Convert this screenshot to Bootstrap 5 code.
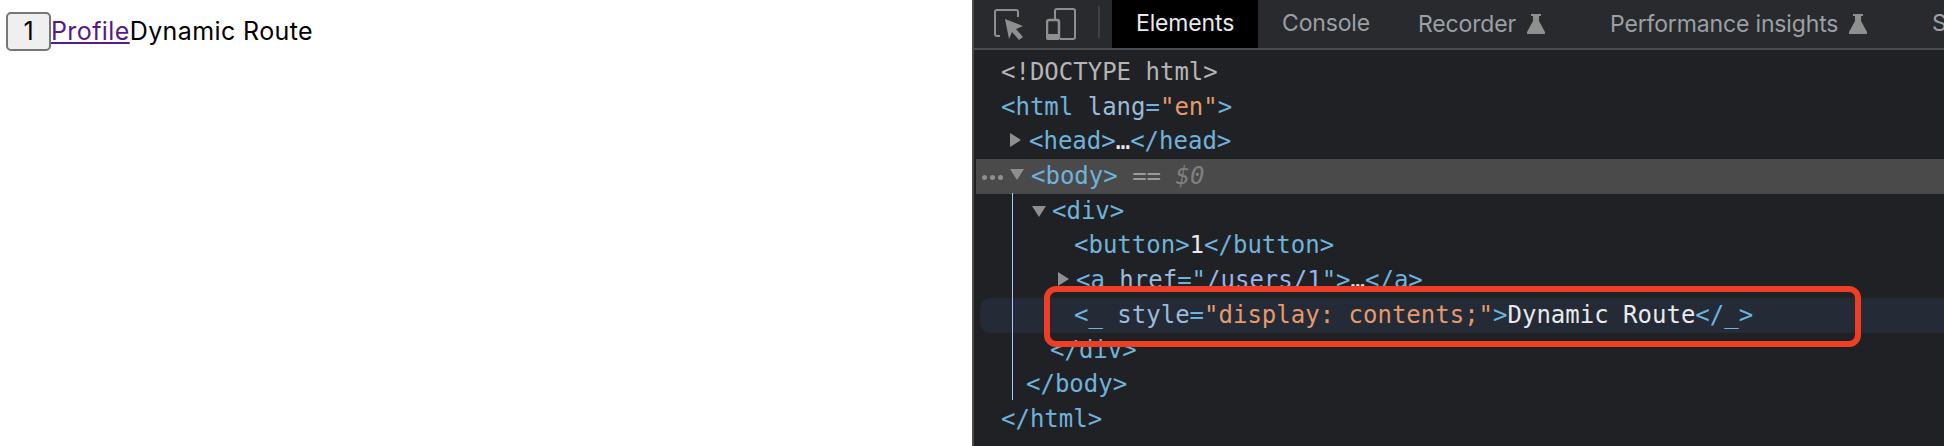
<!DOCTYPE html>
<html lang="en"><head><meta charset="utf-8">
<link href="https://cdn.jsdelivr.net/npm/bootstrap@5.3.0/dist/css/bootstrap.min.css" rel="stylesheet">
<style>
html,body{height:446px;overflow:hidden;background:#fff}
.shot{height:446px;width:1944px}
.page-pane{width:972px;padding:12px 0 0 6px;font:25px/39px Inter,"Liberation Sans",sans-serif;color:#000;letter-spacing:.4px}
.num-btn{width:45px;height:39px;padding:0;background:#efefef;border:2px solid #767676;border-radius:5px;font:inherit;color:#000;line-height:33px}
.page-link-x{color:#551a8b;text-decoration:underline}
.dev-pane{width:972px;background:#202124;border-left:2px solid #4c4c4c;position:relative}
.dev-bar{height:50px;background:#292a2d;border-bottom:2px solid #494c50;font:23px/46px Inter,"Liberation Sans",sans-serif;color:#9aa0a6;letter-spacing:-.15px;white-space:nowrap;overflow:hidden}
.bar-icons{width:124px;padding-left:20px;gap:22px;flex:none}
.bar-sep{width:2px;height:32px;background:#3f4144;margin:6px 12px 0 0;flex:none}
.dev-tab{height:48px;padding:0 24px;flex:none}
.dev-tab.on{background:#000;color:#e8eaed;width:146px}
.tab-two{width:136px}.tab-rec{width:192px}.tab-perf{width:322px}
.flask-gap{gap:11px}
.tree{font:24px/34.7px "DejaVu Sans Mono",monospace;color:#6fb3dc;padding-top:5px}
.tree-row{height:34.7px;position:relative;white-space:pre}
.i0{padding-left:27px}.i1{padding-left:55px}.i2{padding-left:78px}.i3{padding-left:100px}.i3b{padding-left:102px}.i2c{padding-left:76px}.i1c{padding-left:52px}
.row-sel{background:#4a4a4a;margin-left:2px}
.row-hover{background:#242a36;margin-left:6px;border-radius:10px 0 0 10px;padding-left:94px}
.c-doc{color:#b5b5b5}.c-attr{color:#9bbbdc}.c-val{color:#e49a6d}.c-txt{color:#e8eaed}.c-eq{color:#9a9a9a}.c-sym{color:#808080;font-style:italic}.c-lnk{color:#9bb4ec;text-decoration:underline}
.arrow{position:absolute;top:9px;width:0;height:0}
.a-down{border-left:7px solid transparent;border-right:7px solid transparent;border-top:11px solid #8f8f8f}
.a-right{border-top:7px solid transparent;border-bottom:7px solid transparent;border-left:11px solid #8f8f8f}
.a-head{left:36px}.a-body{left:34px;top:10px}.a-div{left:58px;top:12px}.a-a{left:84px}
.dots{position:absolute;left:6px;top:16px;width:5px;height:5px;border-radius:50%;background:#8f8f8f;box-shadow:8px 0 #8f8f8f,16px 0 #8f8f8f}
.guide{position:absolute;left:38px;top:193px;bottom:46px;width:1px;background:#a8c7fa}
.mark-box{position:absolute;left:70px;top:286px;width:817px;height:61px;border:6px solid #ee3e26;border-radius:12px}
</style></head><body class="m-0">
<div class="shot d-flex">
<div class="page-pane"><button class="num-btn align-top" type="button">1</button><a class="page-link-x" href="#">Profile</a>Dynamic Route</div>
<div class="dev-pane">
<div class="dev-bar d-flex">
<div class="bar-icons d-flex align-items-center">
<svg width="30" height="32" viewBox="0 0 30 32"><path d="M6 28H3a2 2 0 0 1-2-2V4a2 2 0 0 1 2-2h19a2 2 0 0 1 2 2v5" fill="none" stroke="#8f8f8f" stroke-width="2"/><path d="M11 11l18 7-7 3 7 8-4 3-7-8-3 7z" fill="#8f8f8f"/></svg>
<svg width="30" height="32" viewBox="0 0 30 32"><path d="M9 11V3a2 2 0 0 1 2-2h16a2 2 0 0 1 2 2v26a2 2 0 0 1-2 2H14" fill="none" stroke="#8f8f8f" stroke-width="2"/><rect x="1" y="12" width="12" height="19" rx="2" fill="none" stroke="#8f8f8f" stroke-width="2.5"/><rect x="1" y="26" width="12" height="5" fill="#8f8f8f"/></svg>
</div>
<div class="bar-sep"></div>
<div class="dev-tab on">Elements</div>
<div class="dev-tab tab-two">Console</div>
<div class="dev-tab tab-rec d-flex align-items-center flask-gap"><span>Recorder</span><svg width="18" height="20" viewBox="0 0 18 20"><path d="M4 0h10v2h-2v5l6 11a1.3 1.3 0 0 1-1 2H1a1.3 1.3 0 0 1-1-2L6 7V2H4z" fill="#8f8f8f"/></svg></div>
<div class="dev-tab tab-perf d-flex align-items-center flask-gap"><span>Performance insights</span><svg width="18" height="20" viewBox="0 0 18 20"><path d="M4 0h10v2h-2v5l6 11a1.3 1.3 0 0 1-1 2H1a1.3 1.3 0 0 1-1-2L6 7V2H4z" fill="#8f8f8f"/></svg></div>
<div class="dev-tab">S</div>
</div>
<div class="tree">
<div class="tree-row i0 c-doc">&lt;!DOCTYPE html&gt;</div>
<div class="tree-row i0">&lt;html <span class="c-attr">lang</span>=<span class="c-val">"en"</span>&gt;</div>
<div class="tree-row i1"><i class="arrow a-right a-head"></i>&lt;head&gt;<span class="c-txt">…</span>&lt;/head&gt;</div>
<div class="tree-row row-sel"><span class="d-block i1"><i class="dots"></i><i class="arrow a-down a-body"></i>&lt;body&gt; <span class="c-eq">==</span> <span class="c-sym">$0</span></span></div>
<div class="tree-row i2"><i class="arrow a-down a-div"></i>&lt;div&gt;</div>
<div class="tree-row i3">&lt;button&gt;<span class="c-txt">1</span>&lt;/button&gt;</div>
<div class="tree-row i3b"><i class="arrow a-right a-a"></i>&lt;a <span class="c-attr">href</span>=<span>"</span><span class="c-lnk">/users/1</span>"&gt;<span class="c-txt">…</span>&lt;/a&gt;</div>
<div class="tree-row row-hover">&lt;_ <span class="c-attr">style</span>=<span class="c-val">"display: contents;"</span>&gt;<span class="c-txt">Dynamic Route</span>&lt;/_&gt;</div>
<div class="tree-row i2c">&lt;/div&gt;</div>
<div class="tree-row i1c">&lt;/body&gt;</div>
<div class="tree-row i0">&lt;/html&gt;</div>
</div>
<div class="guide"></div>
<div class="mark-box"></div>
</div>
</div>
<script src="https://cdn.jsdelivr.net/npm/bootstrap@5.3.0/dist/js/bootstrap.bundle.min.js"></script>
</body></html>
